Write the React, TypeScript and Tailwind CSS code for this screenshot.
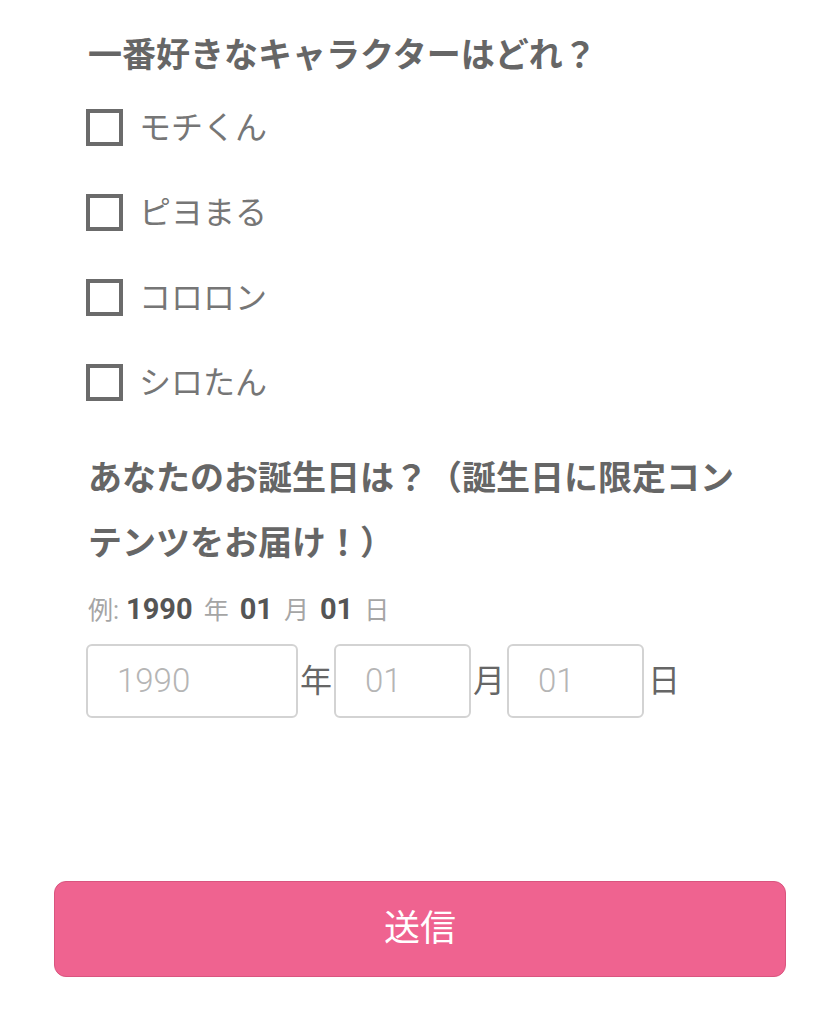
import React from "react"

const characters = ["モチくん", "ピヨまる", "コロロン", "シロたん"]

function CheckRow({ label }: { label: string }) {
  return (
    <label className="flex h-[85px] items-center gap-[16px]">
      <span className="block size-[37px] border-[4px] border-[#6b6b6b] bg-white" />
      <span className="text-[32px] leading-none text-[#767676]">{label}</span>
    </label>
  )
}

function DateBox({ placeholder, width }: { placeholder: string, width: string }) {
  return (
    <div className={`${width} flex h-[74px] items-center rounded-[6px] border-2 border-[#d3d3d3] pl-[29px] font-['Roboto',sans-serif] text-[33px] font-light text-[#b5b5b5]`}>
      {placeholder}
    </div>
  )
}

export default function App() {
  return (
    <div className="min-h-[1024px] bg-white font-['Roboto','Noto_Sans_CJK_JP',sans-serif]">
      <div className="px-[88px] pt-[31px]">
        <h2 className="text-[34px] font-bold leading-[48px] text-[#666]">一番好きなキャラクターはどれ？</h2>
        <div className="mt-[6px] -ml-[2px]">
          {characters.map((c) => (
            <CheckRow key={c} label={c} />
          ))}
        </div>
        <h2 className="mt-[21px] text-[34px] font-bold leading-[65px] text-[#666]">
          あなたのお誕生日は？（誕生日に限定コンテンツをお届け！）
        </h2>
        <p className="mt-[12px] flex h-[36px] items-baseline gap-[11px] text-[25px] text-[#a5a5a5]">
          <span className="-mr-[4px]">例:</span>
          <b className="font-['Roboto',sans-serif] text-[29px] text-[#555]">1990</b>
          <span>年</span>
          <b className="font-['Roboto',sans-serif] text-[29px] text-[#555]">01</b>
          <span>月</span>
          <b className="font-['Roboto',sans-serif] text-[29px] text-[#555]">01</b>
          <span>日</span>
        </p>
        <div className="-ml-[2px] mt-[20px] flex items-center text-[32px] text-[#666]">
          <DateBox placeholder="1990" width="w-[212px]" />
          <span className="mx-[2px]">年</span>
          <DateBox placeholder="01" width="w-[137px]" />
          <span className="mx-[2px]">月</span>
          <DateBox placeholder="01" width="w-[137px]" />
          <span className="ml-[4px]">日</span>
        </div>
      </div>
      <div className="px-[54px] pt-[163px]">
        <button className="flex h-[96px] w-full items-center justify-center rounded-[12px] border border-[#d9557f] bg-[#ef6390] text-[36px] text-white">
          送信
        </button>
      </div>
    </div>
  )
}
